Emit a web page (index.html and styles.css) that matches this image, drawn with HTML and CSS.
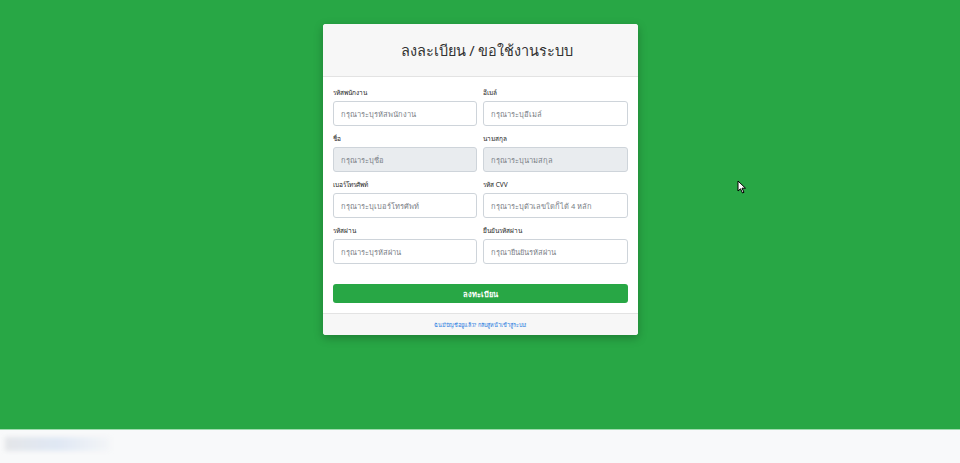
FILE: index.html
```html
<!DOCTYPE html>
<html lang="th">
<head>
  <meta charset="UTF-8">
  <meta name="viewport" content="width=device-width, initial-scale=1.0">
  <title>ลงละเบียน / ขอใช้งานระบบ</title>
  <link rel="stylesheet" href="styles.css">
</head>
<body>

<div class="page">
  <div class="card">
    <div class="card-header">
      <h3>ลงละเบียน / ขอใช้งานระบบ</h3>
    </div>
    <div class="card-body">
      <div class="row">
        <div class="group">
          <label>รหัสพนักงาน</label>
          <input type="text" placeholder="กรุณาระบุรหัสพนักงาน">
        </div>
        <div class="group">
          <label>อีเมล์</label>
          <input type="text" placeholder="กรุณาระบุอีเมล์">
        </div>
      </div>
      <div class="row">
        <div class="group">
          <label>ชื่อ</label>
          <input type="text" placeholder="กรุณาระบุชื่อ" disabled>
        </div>
        <div class="group">
          <label>นามสกุล</label>
          <input type="text" placeholder="กรุณาระบุนามสกุล" disabled>
        </div>
      </div>
      <div class="row">
        <div class="group">
          <label>เบอร์โทรศัพท์</label>
          <input type="text" placeholder="กรุณาระบุเบอร์โทรศัพท์">
        </div>
        <div class="group">
          <label>รหัส CVV</label>
          <input type="text" placeholder="กรุณาระบุตัวเลขใดก็ได้ 4 หลัก">
        </div>
      </div>
      <div class="row">
        <div class="group">
          <label>รหัสผ่าน</label>
          <input type="password" placeholder="กรุณาระบุรหัสผ่าน">
        </div>
        <div class="group">
          <label>ยืนยันรหัสผ่าน</label>
          <input type="password" placeholder="กรุณายืนยันรหัสผ่าน">
        </div>
      </div>
      <button class="btn-register">ลงทะเบียน</button>
    </div>
    <div class="card-footer">
      <a href="#">ฉันมีบัญชีอยู่แล้ว? กลับสู่หน้าเข้าสู่ระบบ!</a>
    </div>
  </div>

  <!-- cursor -->
  <svg class="cursor" width="10" height="14" viewBox="0 0 10 14">
    <path d="M1 1 L1 11 L3.5 8.8 L5.5 13 L7 12.3 L5 8.2 L8.5 8.2 Z" fill="#fff" stroke="#000" stroke-width="1"/>
  </svg>
</div>

<div class="bottom-bar">
  <div class="blur-box"></div>
</div>

</body>
</html>
```

FILE: styles.css
```css
* { box-sizing: border-box; }
body { margin: 0; font-family: "Noto Sans", "DejaVu Sans", sans-serif; background-color: #f8f9fa; width: 960px; height: 463px; overflow: hidden; }
.page { background-color: #28a745; height: 429px; padding-top: 24px; position: relative; }
.card { width: 315px; margin: 0 auto; background-color: #fff; border-radius: 3px; box-shadow: 0 3px 10px rgba(0, 0, 0, 0.25); overflow: hidden; }
.card-header { height: 53px; background-color: #f7f7f7; border-bottom: 1px solid #e3e3e3; display: flex; justify-content: center; align-items: center; }
.card-header h3 { margin: 0; padding-left: 14px; font-size: 14.5px; font-weight: normal; color: #333; }
.card-body { padding: 11px 10px 10px 10px; }
.row { display: flex; gap: 6px; margin-bottom: 8px; }
.group { flex: 1; }
label { display: block; height: 10px; font-size: 6.5px; line-height: 10px; color: #222; margin-bottom: 3px; overflow: visible; }
input { display: block; width: 100%; height: 25px; border: 1px solid #ced4da; border-radius: 3px; padding: 0 7px; font-size: 7.5px; font-family: inherit; color: #495057; background-color: #fff; }
input::placeholder { color: #7a8087; }
input:disabled { background-color: #e9ecef; }
.btn-register { display: block; width: 100%; height: 19px; margin-top: 20px; background-color: #28a745; color: #fff; border: none; border-radius: 3px; font-family: inherit; font-size: 7.5px; font-weight: bold; cursor: pointer; }
.card-footer { height: 22px; background-color: #f7f7f7; border-top: 1px solid #e3e3e3; display: flex; justify-content: center; align-items: center; }
.card-footer a { color: #1f7ae0; font-size: 5.5px; text-decoration: none; }
.cursor { position: absolute; left: 737px; top: 180px; }
.bottom-bar { height: 34px; border-top: 1px solid #9fdcae; padding: 7px 5px; }
.blur-box { width: 105px; height: 14px; background: linear-gradient(90deg, #e4e6e9 0%, #e0e8f4 50%, #f4f5f7 100%); filter: blur(2px); }
```
